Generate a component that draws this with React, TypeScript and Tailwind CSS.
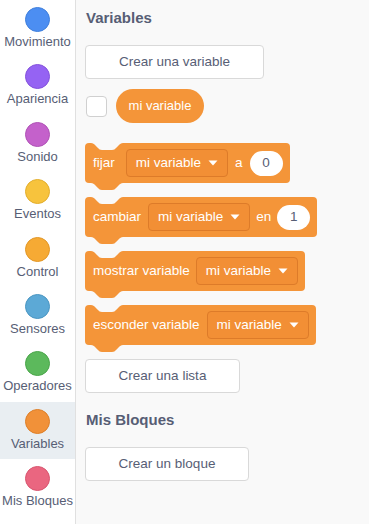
const categories = [
  { name: "Movimiento", color: "bg-[#4c8ef2] border-[#3f7fdc]" },
  { name: "Apariencia", color: "bg-[#9563f3] border-[#8452dc]" },
  { name: "Sonido", color: "bg-[#c461cb] border-[#b052b6]" },
  { name: "Eventos", color: "bg-[#f7c33d] border-[#e3ae2c]" },
  { name: "Control", color: "bg-[#f6aa34] border-[#e29726]" },
  { name: "Sensores", color: "bg-[#5ca9d6] border-[#4a96c2]" },
  { name: "Operadores", color: "bg-[#5cb95c] border-[#4aa54a]" },
  { name: "Variables", color: "bg-[#f19139] border-[#de7f28]", active: true },
  { name: "Mis Bloques", color: "bg-[#ea6680] border-[#d8556f]" },
];

const font = "font-['Liberation_Sans',Arial,sans-serif]";

function Notch({ fill }: { fill: string }) {
  return (
    <svg width="32" height="7" viewBox="0 0 32 7" className="block">
      <path d="M0 0 c2 0 3 1 4 2 l3 3 c1 1 2 2 4 2 h10 c2 0 3 -1 4 -2 l3 -3 c1 -1 2 -2 4 -2 Z" fill={fill} />
    </svg>
  );
}

function Dropdown() {
  return (
    <div className="flex h-[28px] items-center gap-[7px] rounded-[4px] border border-[#dd7b29] bg-[#f28f35] px-[9px]">
      <span>mi variable</span>
      <svg width="10" height="6" viewBox="0 0 10 6">
        <path d="M0.5 0.5 h9 l-4.5 5 Z" fill="white" />
      </svg>
    </div>
  );
}

function Oval({ value }: { value: string }) {
  return (
    <div className="flex h-[25px] w-[33px] items-center justify-center rounded-full bg-white text-[#575e75]">
      {value}
    </div>
  );
}

function Block({ children }: { children: React.ReactNode }) {
  return (
    <div className="mb-[7px] self-start">
      <div className="relative flex h-[40px] items-center rounded-[4px] bg-[#f49539] pl-[8px] pr-[7px] text-[13.5px] text-white">
        <div className="absolute left-[6px] top-0">
          <Notch fill="#f9f9f9" />
        </div>
        {children}
      </div>
      <div className="ml-[6px]">
        <Notch fill="#f49539" />
      </div>
    </div>
  );
}

function Button({ label, width }: { label: string; width: string }) {
  return (
    <div
      className={`flex h-[34px] ${width} items-center justify-center rounded-[4px] border border-[#d9d9d9] bg-white text-[13.5px] text-[#575e75]`}
    >
      {label}
    </div>
  );
}

export default function App() {
  return (
    <div className={`flex h-[524px] w-[369px] overflow-hidden ${font}`}>
      <div className="flex w-[76px] shrink-0 flex-col border-r border-[#e0e0e0] bg-white">
        {categories.map((c) => (
          <div
            key={c.name}
            className={`flex h-[57.4px] flex-col items-center pt-[7px] ${c.active ? "bg-[#e9eef2]" : ""}`}
          >
            <div className={`h-[25px] w-[25px] rounded-full border ${c.color}`} />
            <div className="mt-[2px] text-[13px] leading-[15px] text-[#575e75]">{c.name}</div>
          </div>
        ))}
      </div>
      <div className="flex flex-1 flex-col bg-[#f9f9f9] pl-[9px] pt-[9px]">
        <div className="ml-[1px] text-[15px] font-bold leading-[18px] text-[#575e75]">Variables</div>
        <div className="mt-[18px]">
          <Button label="Crear una variable" width="w-[179px]" />
        </div>
        <div className="mt-[10px] flex h-[34px] items-center">
          <div className="ml-[1px] h-[21px] w-[21px] rounded-[4px] border border-[#d0d0d0] bg-white" />
          <div className="ml-[9px] flex h-[34px] w-[88px] items-center justify-center rounded-full bg-[#f49539] text-[13px] text-white">
            mi variable
          </div>
        </div>
        <div className="mt-[20px] flex flex-col">
          <Block>
            <span className="mr-[11px]">fijar</span>
            <Dropdown />
            <span className="mx-[7px]">a</span>
            <Oval value="0" />
          </Block>
          <Block>
            <span className="mr-[7px]">cambiar</span>
            <Dropdown />
            <span className="mx-[6px]">en</span>
            <Oval value="1" />
          </Block>
          <Block>
            <span className="mr-[6px]">mostrar variable</span>
            <Dropdown />
          </Block>
          <Block>
            <span className="mr-[7px]">esconder variable</span>
            <Dropdown />
          </Block>
        </div>
        <Button label="Crear una lista" width="w-[155px]" />
        <div className="ml-[1px] mt-[18px] text-[15px] font-bold leading-[18px] text-[#575e75]">Mis Bloques</div>
        <div className="mt-[18px]">
          <Button label="Crear un bloque" width="w-[164px]" />
        </div>
      </div>
    </div>
  );
}
